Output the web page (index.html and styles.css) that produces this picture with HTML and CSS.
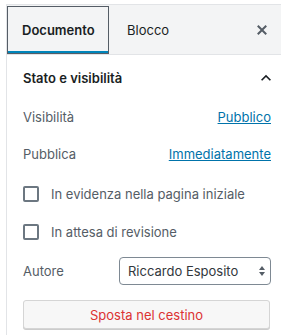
FILE: index.html
```html
<!DOCTYPE html>
<html lang="it">
<head>
<meta charset="utf-8">
<link rel="stylesheet" href="styles.css">
</head>
<body>
<div class="sidebar">
  <div class="tabs">
    <button class="tab active">Documento</button>
    <button class="tab">Blocco</button>
    <button class="close" aria-label="Chiudi">
      <svg width="20" height="20" viewBox="0 0 20 20"><path d="M14.95 6.46L11.41 10l3.54 3.54-1.41 1.41L10 11.42l-3.53 3.53-1.42-1.42L8.58 10 5.05 6.47l1.42-1.42L10 8.58l3.54-3.53z" fill="#555d66"/></svg>
    </button>
  </div>
  <div class="panel">
    <div class="panel-head">
      <span>Stato e visibilità</span>
      <svg width="20" height="20" viewBox="0 0 24 24"><path d="M12 8l-6 6 1.41 1.41L12 10.83l4.59 4.58L18 14z" fill="#191e23"/></svg>
    </div>
    <div class="row r1"><span class="label">Visibilità</span><a class="link" href="#">Pubblico</a></div>
    <div class="row r2"><span class="label">Pubblica</span><a class="link" href="#">Immediatamente</a></div>
    <label class="check c1"><span class="box"></span><span class="label">In evidenza nella pagina iniziale</span></label>
    <label class="check c2"><span class="box"></span><span class="label">In attesa di revisione</span></label>
    <div class="row r3"><span class="label">Autore</span>
      <div class="select-wrap">
        <select class="select"><option>Riccardo Esposito</option></select>
        <svg class="arrows" width="8" height="12" viewBox="0 0 8 12"><path d="M4 1L7 5H1z M4 11L1 7h6z" fill="#555d66"/></svg>
      </div>
    </div>
    <button class="trash">Sposta nel cestino</button>
  </div>
</div>
</body>
</html>
```
FILE: styles.css
```css
* { box-sizing: border-box; }
html, body { margin: 0; padding: 0; background: #fff; }
body {
  font-family: Inter, "Noto Sans", sans-serif;
  font-size: 13px;
  color: #191e23;
  padding: 4px 0 0 6px;
}
.sidebar {
  border-left: 1px solid #e2e4e7;
  border-top: 1px solid #e2e4e7;
  min-height: 331px;
}
.tabs {
  display: flex;
  align-items: stretch;
  height: 50px;
  background: #f3f4f5;
  border-bottom: 1px solid #e2e4e7;
}
.tab {
  font: inherit;
  background: transparent;
  border: 0;
  padding: 0 16px 0 18px;
  color: #191e23;
  margin: 0;
}
.tab.active {
  font-weight: 600;
  padding: 0 15px;
  width: 102px;
  margin-top: 1px;
  box-shadow: inset 0 0 0 1px #555d66, inset 0 -3px 0 0 #0085ba;
}
.close {
  margin-left: auto;
  margin-right: 1px;
  width: 36px;
  background: transparent;
  border: 0;
  padding: 0;
  display: flex;
  align-items: center;
  justify-content: center;
}
.panel { padding: 0 10px 0 16px; }
.panel-head {
  display: flex;
  justify-content: space-between;
  align-items: center;
  height: 46px;
  font-weight: 600;
  font-size: 13px;
}
.panel-head svg { margin-right: -5px; }
.row {
  display: flex;
  justify-content: space-between;
  align-items: center;
  height: 24px;
}
.r1 { margin-top: 4px; }
.r2 { margin-top: 13px; }
.label { color: #555d66; }
.link { color: #0073aa; text-decoration: underline; }
.check {
  display: flex;
  align-items: center;
  height: 24px;
  gap: 12px;
}
.c1 { margin-top: 16px; }
.c2 { margin-top: 14px; }
.box {
  width: 16px;
  height: 16px;
  border: 2px solid #6c7781;
  border-radius: 2px;
}
.r3 { margin-top: 13px; height: 28px; }
.select-wrap { position: relative; }
.select {
  appearance: none;
  -webkit-appearance: none;
  width: 152px;
  height: 28px;
  font: inherit;
  color: #32373c;
  background: #fff;
  border: 1px solid #7e8993;
  border-radius: 4px;
  padding: 0 8px;
}
.arrows { position: absolute; right: 5px; top: 8px; }
.trash {
  display: block;
  width: 247px;
  height: 29px;
  margin-top: 15px;
  font: inherit;
  color: #dc3232;
  background: #f7f7f7;
  border: 1px solid #d5d5d5;
  border-radius: 3px;
  box-shadow: 0 1px 0 #ccc;
}
```
